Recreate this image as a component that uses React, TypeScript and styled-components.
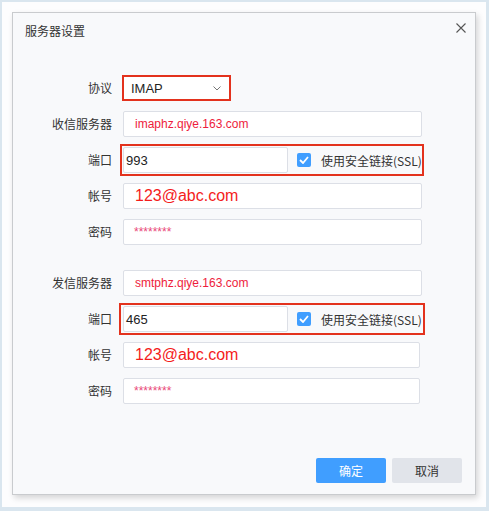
import React from "react";
import styled, { createGlobalStyle } from "styled-components";

const GlobalStyle = createGlobalStyle`
  html, body { margin: 0; padding: 0; background: #dae6ef; }
  body { font-family: "Liberation Sans", "Noto Sans CJK SC", sans-serif; }
  * { box-sizing: border-box; }
`;

const CJK = `"Noto Sans CJK SC", "Liberation Sans", sans-serif`;

const Frame = styled.div`
  margin: 2px 0 0 2px;
  width: 484px;
  height: 505px;
  padding: 10px;
  background: #fdfdfe;
`;

const Dialog = styled.div`
  width: 464px;
  height: 483px;
  border: 1px solid #c9cbce;
  background: #f8f9fb;
  box-shadow: 2px 3px 6px rgba(0, 0, 0, 0.16);
  display: flex;
  flex-direction: column;
`;

const Header = styled.div`
  display: flex;
  justify-content: space-between;
  align-items: flex-start;
  padding: 10px 9px 0 12px;
`;

const Title = styled.div`
  font-family: ${CJK};
  font-size: 12px;
  line-height: 16px;
  color: #333;
`;

const CloseBtn = styled.div`
  width: 10px;
  height: 10px;
  display: flex;
`;

const Body = styled.div`
  margin-top: 36px;
  padding-right: 53px;
  display: flex;
  flex-direction: column;
  gap: 25px;
`;

const Section = styled.div`
  display: flex;
  flex-direction: column;
  gap: 10px;
`;

const Row = styled.div`
  display: grid;
  grid-template-columns: 99px 1fr;
  column-gap: 11px;
  height: 26px;
  align-items: center;
`;

const Label = styled.div`
  font-family: ${CJK};
  font-size: 12px;
  color: #333;
  text-align: right;
  line-height: 16px;
`;

const Field = styled.div<{ $color?: string; $size?: number; $pad?: number; $width?: number }>`
  height: 26px;
  width: ${(p) => (p.$width ? `${p.$width}px` : "100%")};
  flex: none;
  background: #fff;
  border: 1px solid #dcdfe6;
  border-radius: 2px;
  display: flex;
  align-items: center;
  padding-left: ${(p) => p.$pad ?? 11}px;
  color: ${(p) => p.$color ?? "#222"};
  font-family: "Liberation Sans", sans-serif;
  font-size: ${(p) => p.$size ?? 12}px;
  white-space: nowrap;
  overflow: hidden;
`;

const Select = styled.div`
  width: 109px;
  height: 26px;
  margin-left: -1px;
  border: 2px solid #e3321d;
  background: #fff;
  display: flex;
  align-items: center;
  justify-content: space-between;
  padding: 0 8px 0 7px;
  font-family: "Liberation Sans", sans-serif;
  font-size: 13px;
  color: #1f1f1f;
`;

const Highlight = styled.div<{ $ml: number; $mr: number }>`
  display: flex;
  align-items: center;
  border: 2px solid #e3321d;
  margin: -3px ${(p) => p.$mr}px -3px ${(p) => p.$ml}px;
  padding: 1px 0 1px ${(p) => -p.$ml - 2}px;
  height: 32px;
`;

const Check = styled.div`
  width: 14px;
  height: 14px;
  margin-left: 9px;
  border-radius: 2px;
  background: #409eff;
  display: flex;
  align-items: center;
  justify-content: center;
  flex: none;
`;

const CheckLabel = styled.span`
  margin-left: 10px;
  font-family: ${CJK};
  font-size: 12px;
  color: #333;
  white-space: nowrap;
`;

const Footer = styled.div`
  margin-top: auto;
  display: flex;
  justify-content: flex-end;
  gap: 6px;
  padding: 0 13px 11px 0;
`;

const Button = styled.button<{ $primary?: boolean }>`
  width: 70px;
  height: 25px;
  border: none;
  border-radius: 2px;
  font-family: ${CJK};
  font-size: 12px;
  background: ${(p) => (p.$primary ? "#409eff" : "#e1e4ea")};
  color: ${(p) => (p.$primary ? "#fff" : "#333")};
  padding: 0;
`;

const CloseIcon = () => (
  <svg width="10" height="10" viewBox="0 0 10 10">
    <path d="M0.5 0.5L9.5 9.5M9.5 0.5L0.5 9.5" stroke="#555" strokeWidth="1.1" />
  </svg>
);

const Chevron = () => (
  <svg width="8" height="5" viewBox="0 0 8 5">
    <path d="M0.5 0.5L4 4L7.5 0.5" stroke="#777" strokeWidth="1" fill="none" />
  </svg>
);

const Tick = () => (
  <svg width="10" height="8" viewBox="0 0 10 8">
    <path d="M1 4L4 7L9 1" stroke="#fff" strokeWidth="1.8" fill="none" />
  </svg>
);

const PortRow = ({ port, ml, mr }: { port: string; ml: number; mr: number }) => (
  <Row>
    <Label>端口</Label>
    <Highlight $ml={ml} $mr={mr}>
      <Field $width={165} $pad={2} $size={13}>
        {port}
      </Field>
      <Check>
        <Tick />
      </Check>
      <CheckLabel>使用安全链接(SSL)</CheckLabel>
    </Highlight>
  </Row>
);

const RED = "#ee1c3c";

export default function App() {
  return (
    <>
      <GlobalStyle />
      <Frame>
        <Dialog>
          <Header>
            <Title>服务器设置</Title>
            <CloseBtn>
              <CloseIcon />
            </CloseBtn>
          </Header>
          <Body>
            <Section>
              <Row>
                <Label>协议</Label>
                <Select>
                  <span>IMAP</span>
                  <Chevron />
                </Select>
              </Row>
              <Row>
                <Label>收信服务器</Label>
                <Field $color={RED}>imaphz.qiye.163.com</Field>
              </Row>
              <PortRow port="993" ml={-3} mr={0} />
              <Row>
                <Label>帐号</Label>
                <Field $color="#f41c1c" $size={16}>123@abc.com</Field>
              </Row>
              <Row>
                <Label>密码</Label>
                <Field $color="#e9497a" $size={12} $pad={10}>********</Field>
              </Row>
            </Section>
            <Section>
              <Row>
                <Label>发信服务器</Label>
                <Field $color={RED}>smtphz.qiye.163.com</Field>
              </Row>
              <PortRow port="465" ml={-4} mr={-3} />
              <Row>
                <Label>帐号</Label>
                <Field $color="#f41c1c" $size={16} $width={297}>123@abc.com</Field>
              </Row>
              <Row>
                <Label>密码</Label>
                <Field $color="#e9497a" $size={12} $pad={10} $width={297}>********</Field>
              </Row>
            </Section>
          </Body>
          <Footer>
            <Button $primary>确定</Button>
            <Button>取消</Button>
          </Footer>
        </Dialog>
      </Frame>
    </>
  );
}
